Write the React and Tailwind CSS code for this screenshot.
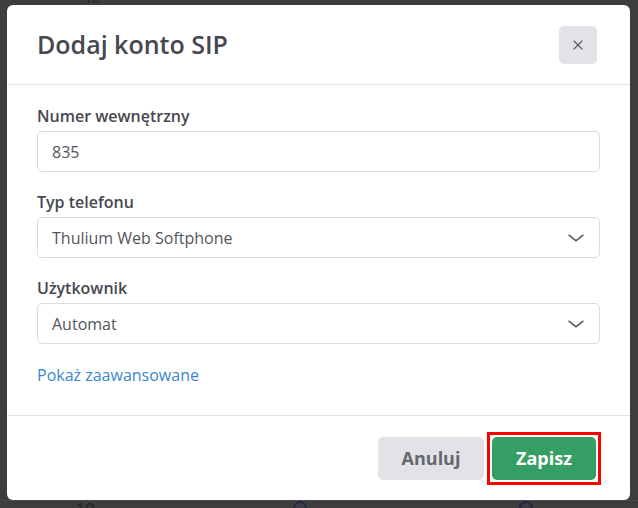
import { ChevronDown, X } from "lucide-react";

const fields = [
  { label: "Numer wewnętrzny", value: "835", select: false },
  { label: "Typ telefonu", value: "Thulium Web Softphone", select: true },
  { label: "Użytkownik", value: "Automat", select: true },
];

function Field({ label, value, select }) {
  return (
    <div className="flex flex-col">
      <label className="mb-[3px] text-[16px] leading-[24px] font-semibold text-[#47474f]">{label}</label>
      <div className="flex h-[41px] items-center justify-between rounded-[5px] border border-[#dcdcdf] bg-white pl-[14px] pr-[12px]">
        <span className="text-[16px] text-[#55555c]">{value}</span>
        {select && <ChevronDown className="h-[22px] w-[22px] scale-x-125 text-[#55555c]" strokeWidth={1.5} />}
      </div>
    </div>
  );
}

export default function App() {
  return (
    <div
      className="relative h-[508px] w-[638px] overflow-hidden bg-[#3d3d3d]"
      style={{ fontFamily: '"Open Sans", "Noto Sans", sans-serif' }}
    >
      {/* page behind the overlay */}
      <div className="flex h-[508px] flex-col justify-between text-[#222]">
        <div className="flex h-[5px] items-end">
          <span className="ml-[84px] text-[14px] leading-[14px]">10</span>
        </div>
        <div className="flex h-[8px] items-start border-t border-[#4a4a4a]">
          <span className="ml-[76px] text-[16px] leading-[16px]">10</span>
          <span className="ml-[199px] h-[14px] w-[14px] rounded-full border-2 border-[#1d2a44]" />
          <span className="ml-[212px] h-[14px] w-[14px] rounded-full border-2 border-[#1d2a44]" />
        </div>
      </div>

      {/* modal */}
      <div className="absolute left-[7px] top-[5px] flex h-[495px] w-[623px] flex-col rounded-[6px] bg-white">
        <div className="flex h-[80px] items-center justify-between border-b border-[#e4e4e7] pl-[30px] pr-[33px]">
          <h2 className="pt-[1px] text-[25px] font-semibold text-[#47474f]">Dodaj konto SIP</h2>
          <button className="flex h-[38px] w-[38px] items-center justify-center rounded-[5px] bg-[#e2e2e7] text-[#55555c]">
            <X className="h-[16px] w-[16px]" strokeWidth={1.6} />
          </button>
        </div>

        <div className="flex flex-1 flex-col gap-[18px] border-b border-[#e4e4e7] px-[30px] pt-[19px]">
          {fields.map((f) => (
            <Field key={f.label} {...f} />
          ))}
          <a className="mt-[1px] text-[16px] leading-[24px] text-[#3a87d1]">Pokaż zaawansowane</a>
        </div>

        <div className="flex h-[84px] items-center justify-end gap-[8px] pr-[34px]">
          <button className="h-[43px] w-[106px] rounded-[5px] bg-[#e2e2e7] text-[18px] font-bold text-[#66666e]">
            Anuluj
          </button>
          <button className="relative h-[43px] w-[104px] rounded-[5px] bg-[#359e64] text-[18px] font-bold text-white">
            Zapisz
            <span className="absolute -inset-[5px] border-[3px] border-[#ff0000]" />
          </button>
        </div>
      </div>
    </div>
  );
}
